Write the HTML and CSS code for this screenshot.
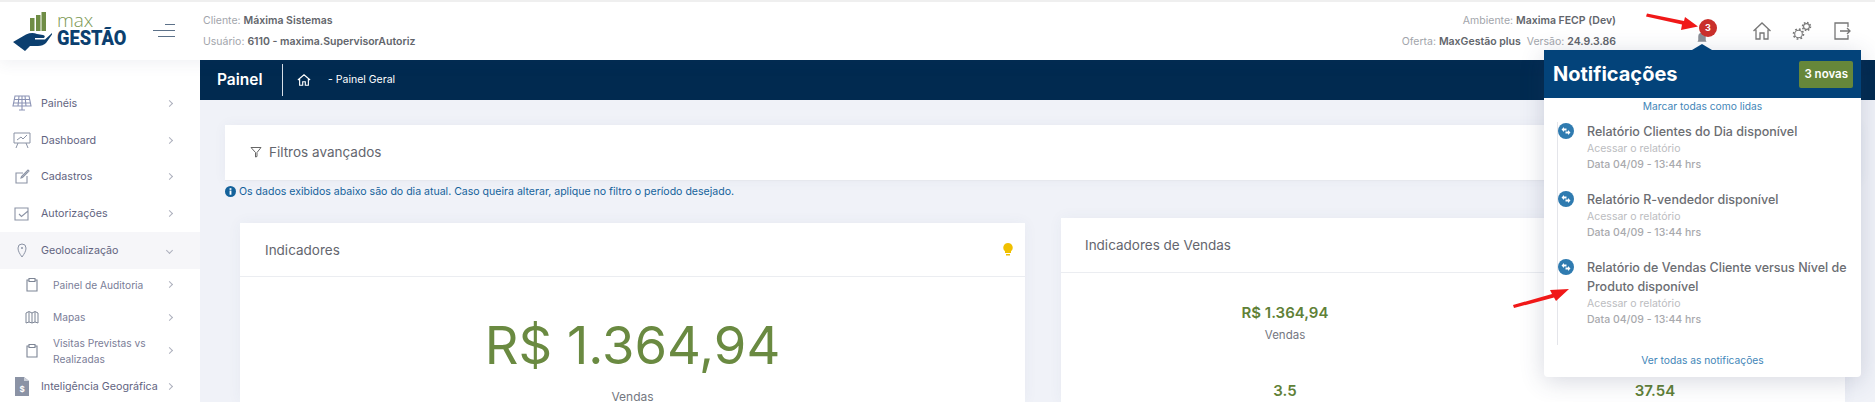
FILE: index.html
```html
<!DOCTYPE html>
<html lang="pt-BR">
<head>
<meta charset="utf-8">
<title>MaxGestão</title>
<link rel="stylesheet" href="styles.css">
</head>
<body>
<div class="page">
  <header class="topbar">
    <div class="brand">
      <svg class="logo-mark" viewBox="0 0 50 50" width="50" height="50" aria-hidden="true">
        <rect x="18" y="11" width="4.500" height="13" fill="#6f8d45"/>
        <rect x="24" y="8" width="4.500" height="16" fill="#6f8d45"/>
        <rect x="29.500" y="5" width="4.500" height="19" fill="#6f8d45"/>
        <path d="M1 35 L14 27.500 Q20 25 25 27 L31 28 Q34 29 32 31 L23 31 L23 32.500 L33 32.500 L40 26 L40 27.500 L34 36 Q31 39 26 39 L18 39 L13 44 Z" fill="#0c3f6f"/>
      </svg>
      <div class="logo-text"><span class="logo-max">max</span><span class="logo-gestao">GESTÃO</span></div>
      <svg class="hamburger" viewBox="0 0 22 14" width="22" height="14" aria-hidden="true">
        <path d="M12 .5H22M0 6.500H22M5 12.500H22" stroke="#5c7189" stroke-width="1" fill="none"/>
      </svg>
    </div>
    <div class="meta">
      <div>Cliente: <b>Máxima Sistemas</b></div>
      <div>Usuário: <b>6110 - maxima.SupervisorAutoriz</b></div>
    </div>
    <div class="meta meta-right">
      <div>Ambiente: <b>Maxima FECP (Dev)</b></div>
      <div>Oferta: <b>MaxGestão plus</b><span class="meta-gap">Versão: <b>24.9.3.86</b></span></div>
    </div>
    <div class="bell">
      <svg viewBox="0 0 16 16" width="12" height="12" aria-hidden="true"><path d="M8 1a5 5 0 0 0-5 5v5l-1 2h12l-1-2V6a5 5 0 0 0-5-5z" fill="#8a8f96"/></svg>
    </div>
    <div class="top-icons">
      <svg viewBox="0 0 20 20" width="20" height="20" aria-hidden="true"><path d="M1.500 10 10 2l8.500 8M4 8.500V18h4v-6h4v6h4V8.500" fill="none" stroke="#777" stroke-width="1.300"/></svg>
      <svg viewBox="0 0 20 20" width="20" height="20" aria-hidden="true"><g fill="none" stroke="#777"><circle cx="6.500" cy="13" r="3.800" stroke-width="1.100"/><circle cx="6.500" cy="13" r="5" stroke-dasharray="1.800 2.100" stroke-width="1.600"/><circle cx="14.500" cy="5.500" r="2.900" stroke-width="1.100"/><circle cx="14.500" cy="5.500" r="4" stroke-dasharray="1.600 1.540" stroke-width="1.500"/></g></svg>
      <svg viewBox="0 0 20 20" width="20" height="20" aria-hidden="true"><path d="M16 6V2H3v16h13v-4M8 10h10M15 7l3 3-3 3" fill="none" stroke="#777" stroke-width="1.300"/></svg>
    </div>
  </header>

  <nav class="sidebar">
    <a class="item"><svg class="ic" viewBox="0 0 20 20" aria-hidden="true"><path d="M3 3h14l2 10H1zM2.500 6.500h15M2 10h16M7 3l-1 10M13 3l1 10M10 3v10M7 17h6M10 13v4" fill="none" stroke="#8b93b5" stroke-width="1.100"/></svg><span>Painéis</span><i class="chev"></i></a>
    <a class="item"><svg class="ic" viewBox="0 0 20 20" aria-hidden="true"><path d="M2 3h16v10H2zM6 13l-2 5M14 13l2 5M5 10l4-3 2 2 4-4" fill="none" stroke="#8b93a5" stroke-width="1"/></svg><span>Dashboard</span><i class="chev"></i></a>
    <a class="item"><svg class="ic" viewBox="0 0 20 20" aria-hidden="true"><path d="M15 9v7H4V6h7M9 11l1.500-.5L17 4l-1-1-6.500 6.500z" fill="none" stroke="#8b93a5" stroke-width="1.100"/></svg><span>Cadastros</span><i class="chev"></i></a>
    <a class="item"><svg class="ic" viewBox="0 0 20 20" aria-hidden="true"><path d="M3 4h13v12H3zM7 10l2.500 2.500L16 7" fill="none" stroke="#8b93a5" stroke-width="1.100"/></svg><span>Autorizações</span><i class="chev"></i></a>
    <a class="item item-active"><svg class="ic" viewBox="0 0 20 20" aria-hidden="true"><path d="M10 17C7.500 13.500 6 11 6 8a4 4 0 0 1 8 0c0 3-1.500 5.500-4 9z" fill="none" stroke="#8b93a5" stroke-width="1"/><circle cx="10" cy="8" r="1" fill="#8b93a5"/></svg><span>Geolocalização</span><i class="chev chev-down"></i></a>
    <a class="item sub sub-a"><svg class="ic-sub" viewBox="0 0 14 16" aria-hidden="true"><path d="M4 3H2v11h10V3h-2M4 1.500h6v3H4z" fill="none" stroke="#7d8595" stroke-width="1.100"/></svg><span>Painel de Auditoria</span><i class="chev"></i></a>
    <a class="item sub sub-b"><svg class="ic-sub" viewBox="0 0 14 16" aria-hidden="true"><path d="M1 4l3-1.500 3 1.500 3-1.500 3 1.500v10l-3-1-3 1-3-1-3 1zM4 3v10M7 4v10M10 3v10" fill="none" stroke="#7d8595" stroke-width="1"/></svg><span>Mapas</span><i class="chev"></i></a>
    <a class="item sub sub-c"><svg class="ic-sub" viewBox="0 0 14 16" aria-hidden="true"><path d="M4 3H2v11h10V3h-2M4 1.500h6v3H4z" fill="none" stroke="#7d8595" stroke-width="1.100"/></svg><span>Visitas Previstas vs Realizadas</span><i class="chev"></i></a>
    <a class="item"><svg class="ic" viewBox="0 0 20 20" aria-hidden="true"><path d="M3 1h9l5 4v15H3z" fill="#8b93a5"/><path d="M12 1v4h5z" fill="#cdd1da"/><text x="10" y="16" font-size="8" font-weight="700" text-anchor="middle" fill="#fff">$</text></svg><span>Inteligência Geográfica</span><i class="chev"></i></a>
  </nav>

  <main class="main">
    <div class="crumbbar">
      <h1>Painel</h1>
      <svg viewBox="0 0 16 16" width="14" height="14" aria-hidden="true"><path d="M1 8l7-6 7 6M3 6.500V14h3.500V10h3v4H13V6.500" fill="none" stroke="#fff" stroke-width="1.300"/></svg>
      <span>- Painel Geral</span>
    </div>
    <div class="content">
      <section class="filters">
        <svg viewBox="0 0 12 12" width="12" height="12" aria-hidden="true"><path d="M1 1.500h10L7 6.500V10.500L5.500 11V6.500z" fill="none" stroke="#666" stroke-width="1"/></svg>
        <span>Filtros avançados</span>
      </section>
      <p class="info"><svg viewBox="0 0 12 12" width="11" height="11" aria-hidden="true"><circle cx="6" cy="6" r="6" fill="#14629b"/><rect x="5" y="5" width="2" height="4.500" fill="#fff"/><rect x="5" y="2.400" width="2" height="1.800" fill="#fff"/></svg>Os dados exibidos abaixo são do dia atual. Caso queira alterar, aplique no filtro o período desejado.</p>
      <div class="cards">
        <section class="card card-left">
          <div class="card-head">
            <h2>Indicadores</h2>
            <svg viewBox="0 0 10 14" width="10" height="14" aria-hidden="true"><path d="M5 0a4.700 4.700 0 0 0-3 8.300V10h6V8.300A4.700 4.700 0 0 0 5 0z" fill="#f0c000"/><rect x="3" y="11" width="4" height="1.500" fill="#f0c000"/></svg>
          </div>
          <div class="hero">
            <div class="hero-value">R$ 1.364,94</div>
            <div class="hero-label">Vendas</div>
          </div>
        </section>
        <section class="card card-right">
          <div class="card-head card-head-right"><h2>Indicadores de Vendas</h2></div>
          <div class="stats">
            <div class="stat"><b>R$ 1.364,94</b><span>Vendas</span></div>
            <div class="stat"></div>
            <div class="stat"><b>3.5</b></div>
            <div class="stat"><b>37.54</b></div>
          </div>
        </section>
      </div>
    </div>
  </main>

  <aside class="notif">
    <div class="notif-head"><strong>Notificações</strong><span class="notif-new">3 novas</span></div>
    <a class="notif-mark">Marcar todas como lidas</a>
    <ul class="notif-list">
      <li>
        <svg class="swap" viewBox="0 0 16 16" aria-hidden="true"><circle cx="8" cy="8" r="8" fill="#2f7bb0"/><path d="M3.500 6.500 6 4v1.500h2.500v2H6V9zM12.500 9.500 10 12v-1.500H7.500v-2H10V7z" fill="#fff"/></svg>
        <h3>Relatório Clientes do Dia disponível</h3>
        <p>Acessar o relatório</p>
        <small>Data 04/09 - 13:44 hrs</small>
      </li>
      <li>
        <svg class="swap" viewBox="0 0 16 16" aria-hidden="true"><circle cx="8" cy="8" r="8" fill="#2f7bb0"/><path d="M3.500 6.500 6 4v1.500h2.500v2H6V9zM12.500 9.500 10 12v-1.500H7.500v-2H10V7z" fill="#fff"/></svg>
        <h3>Relatório R-vendedor disponível</h3>
        <p>Acessar o relatório</p>
        <small>Data 04/09 - 13:44 hrs</small>
      </li>
      <li>
        <svg class="swap" viewBox="0 0 16 16" aria-hidden="true"><circle cx="8" cy="8" r="8" fill="#2f7bb0"/><path d="M3.500 6.500 6 4v1.500h2.500v2H6V9zM12.500 9.500 10 12v-1.500H7.500v-2H10V7z" fill="#fff"/></svg>
        <h3>Relatório de Vendas Cliente versus Nível de Produto disponível</h3>
        <p>Acessar o relatório</p>
        <small>Data 04/09 - 13:44 hrs</small>
      </li>
    </ul>
    <a class="notif-all">Ver todas as notificações</a>
  </aside>
  <span class="badge">3</span>
  <svg class="arrow arrow-top" viewBox="0 0 60 20" width="60" height="20" aria-hidden="true"><path d="M1 1.500 L38 9 L39 5 L52 14.500 L35 18 L36 12.500 L0 4.500 Z" fill="#f01818"/></svg>
  <svg class="arrow arrow-bottom" viewBox="0 0 60 24" width="60" height="24" aria-hidden="true"><path d="M2 20 L41 9 L39 5 L58 4 L45 16 L43 12.500 L3 23 Z" fill="#f01818"/></svg>
</div>
</body>
</html>
```

FILE: styles.css
```css
* { box-sizing: border-box; }
html, body { margin: 0; height: 402px; overflow: hidden; background: #f0f2f8; }
body { font-family: Inter, "Noto Sans", sans-serif; color: #5e6278; }
h1, h2, h3, p { margin: 0; font-weight: 400; }
.page { position: relative; width: 1875px; height: 402px; display: grid; grid-template-columns: 200px 1fr; grid-template-rows: 60px 1fr; overflow: hidden; }

.topbar { grid-column: 1 / 3; display: flex; align-items: center; background: #fff; border-top: 2px solid #efefef; position: relative; z-index: 2; box-shadow: 0 4px 14px rgba(60, 70, 110, .07); }
.brand { width: 203px; flex: none; display: flex; align-items: center; position: relative; height: 100%; padding-left: 12px; }
.logo-mark { flex: none; margin-top: 2px; }
.logo-text { display: flex; flex-direction: column; margin-left: -5px; line-height: 1; }
.logo-max { font: 300 19px/17px "Open Sans", sans-serif; color: #7b9853; margin-top: -4px; }
.logo-gestao { font: 900 21px/18px Roboto, sans-serif; color: #0c3f6f; transform: scaleX(.87); transform-origin: left center; width: 70px; }
.hamburger { margin-left: 26px; }
.meta { font-size: 10.500px; line-height: 21px; color: #a2a5ab; white-space: nowrap; font-family: Inter, sans-serif; margin-top: -1px; }
.meta b { color: #62656b; font-weight: 600; }
.meta-right { margin-left: auto; text-align: right; }
.meta-gap { margin-left: 6px; }
.bell { width: 12px; margin-left: 80px; margin-top: 13px; line-height: 0; }
.top-icons { display: flex; gap: 20px; margin-left: 44px; margin-right: 23px; }

.sidebar { background: #fff; padding-top: 25px; font-size: 10.700px; }
.item { display: flex; align-items: center; height: 36.750px; padding: 0 28px 0 12px; color: #62647f; }
.item span { flex: 1; margin-left: 9px; }
.ic { width: 20px; height: 20px; flex: none; }
.ic-sub { width: 14px; height: 16px; flex: none; margin-left: 13px; }
.item-active { background: #f6f6f9; }
.sub { font-size: 10.200px; color: #7a7d97; line-height: 16px; }
.sub span { margin-left: 14px; }
.sub-a { height: 32px; }
.sub-b { height: 33px; }
.sub-c { height: 34px; }
.chev { width: 5px; height: 5px; flex: none; border-top: 1px solid #adb0bd; border-right: 1px solid #adb0bd; transform: rotate(45deg); }
.chev-down { transform: rotate(135deg); }

.main { display: flex; flex-direction: column; min-width: 0; }
.crumbbar { height: 40px; background: #012a50; color: #fff; display: flex; align-items: center; padding-left: 17px; font-size: 10.500px; }
.crumbbar h1 { font-size: 15.500px; font-weight: 600; width: 66px; height: 32px; line-height: 32px; border-right: 1px solid #d8e0e8; margin-right: 14px; }
.crumbbar span { margin-left: 17px; margin-top: -1px; }
.content { padding: 25px 15px 0 25px; flex: 1; }
.filters { height: 56px; background: #fff; border-bottom: 1px solid #e6e8ee; display: flex; align-items: center; gap: 7px; padding-left: 25px; padding-bottom: 1px; font-size: 13.500px; color: #64666e; box-shadow: 0 0 12px rgba(60, 70, 110, .05); }
.info { font-size: 10.550px; line-height: 13px; color: #14629b; margin-top: 4px; display: flex; align-items: center; gap: 3px; white-space: nowrap; }
.cards { display: grid; grid-template-columns: 785px 784px; gap: 36px; padding-left: 15px; margin-top: 25px; align-items: start; }
.card { background: #fff; box-shadow: 0 0 14px rgba(60, 70, 110, .05); height: 179px; }
.card-right { margin-top: -5px; height: 184px; }
.card-head { height: 54px; border-bottom: 1px solid #ebedf1; display: flex; align-items: center; justify-content: space-between; padding: 0 12px 0 25px; }
.card-head-right { height: 55px; padding-left: 24px; }
.card-head h2 { font-size: 13.500px; color: #64666e; }
.hero { text-align: center; padding-top: 30px; }
.hero-value { font-size: 52.500px; line-height: 76px; color: #6a8a41; font-weight: 400; }
.hero-label { font-size: 12px; line-height: 11px; color: #74777f; margin-top: 8px; }
.stats { display: grid; grid-template-columns: 370px 370px; padding: 30px 0 0 39px; row-gap: 39px; }
.stat { text-align: center; display: flex; flex-direction: column; }
.stat b { font-size: 15px; line-height: 20px; font-weight: 600; color: #5f8137; }
.stat span { font-size: 11.500px; line-height: 14px; color: #74777f; margin-top: 5px; }

.notif { position: absolute; left: 1544px; top: 50px; width: 317px; height: 327px; background: #fff; border-radius: 0 0 4px 4px; box-shadow: 0 4px 24px rgba(50, 60, 100, .2); z-index: 3; }
.notif::before { content: ""; position: absolute; left: 148px; top: -6px; width: 20px; height: 12px; background: #03437a; clip-path: polygon(50% 0, 100% 50%, 0 50%); }
.notif-head { height: 48px; background: #03437a; color: #fff; display: flex; align-items: center; justify-content: space-between; padding: 0 8px 0 9px; }
.notif-head strong { font-size: 20px; font-weight: 700; }
.notif-new { background: #66873a; border-radius: 2px; font-size: 11.500px; font-weight: 600; height: 27px; line-height: 27px; padding: 0 5px; }
.notif-mark, .notif-all { display: block; text-align: center; color: #3f86b8; font-size: 10.260px; line-height: 14px; }
.notif-mark { margin-top: 1px; }
.notif-list { list-style: none; margin: 9px 0 0 13px; padding: 0 0 0 29px; border-left: 1px solid #e4e5ea; height: 223px; }
.notif-list li { position: relative; margin-bottom: 17px; }
.swap { position: absolute; left: -29px; top: 1px; width: 16px; height: 16px; }
.notif-list h3 { font-size: 12.500px; line-height: 19px; font-weight: 500; color: #6b6d72; }
.notif-list p { font-size: 10.500px; line-height: 16px; color: #bbbcc0; }
.notif-list small { display: block; font-size: 10.500px; line-height: 16px; font-weight: 500; color: #a8a9ad; }
.notif-all { margin-top: 8px; }

.badge { position: absolute; left: 1699px; top: 19px; width: 18px; height: 18px; border-radius: 50%; background: #c9302c; color: #fff; font-size: 9px; font-weight: 700; line-height: 18px; text-align: center; z-index: 4; }
.arrow { position: absolute; z-index: 5; }
.arrow-top { left: 1646px; top: 12px; }
.arrow-bottom { left: 1511px; top: 285px; }
```
